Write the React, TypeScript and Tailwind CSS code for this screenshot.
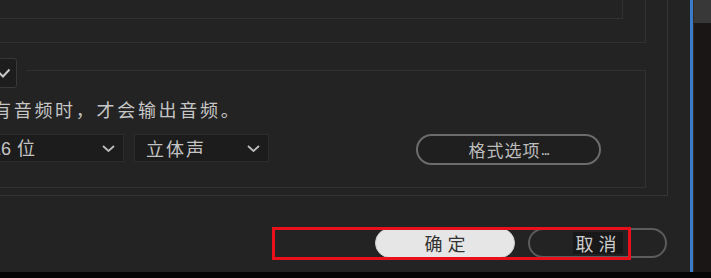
import React from 'react';

const cjk = "font-['Noto_Sans_CJK_SC','Noto_Sans',sans-serif]";

const Chevron: React.FC = () => (
  <svg width="13" height="7" viewBox="0 0 13 7" className="shrink-0">
    <polyline points="1,1 6.5,6 12,1" fill="none" stroke="#bdbdbd" strokeWidth="1.8" />
  </svg>
);

interface SelectProps {
  label: React.ReactNode;
  width: string;
  className?: string;
}

const Select: React.FC<SelectProps> = ({ label, width, className }) => (
  <div
    className={`flex h-[28px] items-center justify-between border border-[#2c2c2c] bg-[#1c1c1c] pl-[11px] pr-[8px] ${width} ${className ?? ''}`}
  >
    <span className="text-[18px] leading-none tracking-[2px] text-[#c4c4c4]">{label}</span>
    <Chevron />
  </div>
);

const App: React.FC = () => {
  return (
    <div className={`flex h-[278px] w-[711px] flex-col overflow-hidden bg-[#232323] ${cjk}`}>
      <div className="flex h-[272px]">
        {/* dialog body */}
        <div className="flex w-[690px] flex-col">
          <div className="flex h-[196px] w-[668px] flex-col border-r border-b border-[#363636]">
            <div className="h-[43px] w-[646px] border-r border-b border-[#313131]">
              <div className="h-[19px] w-[623px] border-r border-b border-[#313131]" />
            </div>

            {/* audio group */}
            <div className="relative -ml-[30px] mt-[27px] h-[118px] w-[676px] border border-[#313131]">
              <div className="absolute -top-[13px] left-[15px] bg-[#232323] pr-[9px]">
                <div className="flex h-[30px] w-[31px] items-center rounded-[3px] border border-[#383838] bg-[#1d1d1d] pl-[11px]">
                  <svg width="13" height="10" viewBox="0 0 13 10">
                    <polyline points="1.5,5 5,8.5 11.5,1.5" fill="none" stroke="#c8c8c8" strokeWidth="2" />
                  </svg>
                </div>
              </div>

              <p className="ml-[22px] mt-[26px] whitespace-nowrap text-[18px] leading-[24px] tracking-[2.7px] text-[#c6c6c6]">
                有音频时，才会输出音频。
              </p>

              <div className="mt-[13px] flex items-start">
                <Select
                  width="w-[145px]"
                  className="ml-[8px]"
                  label={
                    <>
                      <span className="font-['Liberation_Sans',sans-serif] tracking-normal">16</span> 位
                    </>
                  }
                />
                <Select width="w-[135px]" className="ml-[10px]" label="立体声" />
                <button className="ml-[147px] flex h-[31px] w-[185px] items-center justify-center rounded-full border-2 border-[#6c6c6c] bg-[#1f1f1f] text-[17px] leading-none tracking-[1px] text-[#bcbcbc]">
                  格式选项<span className="font-['Liberation_Sans',sans-serif] tracking-[-2px]">...</span>
                </button>
              </div>
            </div>
          </div>

          {/* dialog buttons */}
          <div className="relative mt-[32px] flex justify-end gap-[13px] pr-[23px]">
            <button className="flex h-[30px] w-[140px] items-center justify-center rounded-full border border-[#cfcfcf] bg-[#e6e6e6] pl-[5px] text-[18px] leading-none tracking-[5px] text-[#333]">
              确定
            </button>
            <button className="flex h-[30px] w-[139px] items-center justify-center rounded-full border-2 border-[#5c5c5c] text-[18px] leading-none text-[#cccccc]">
              <span className="bg-[#181818] py-[2px] pl-[3px] pr-[1px] tracking-[5px]">取消</span>
            </button>
            <div className="pointer-events-none absolute -top-[1px] left-[272px] h-[33px] w-[359px] border-[3px] border-[#e8101a]" />
          </div>
        </div>

        {/* adjacent panel edge */}
        <div className="w-[3px] bg-[#3a7ccc]" />
        <div className="flex flex-1 flex-col border-l border-[#3a2a1a]">
          <div className="h-[23px] bg-[#383838]" />
          <div className="flex-1 bg-[#1b1616]" />
        </div>
      </div>
      <div className="h-[6px] bg-[#050505]" />
    </div>
  );
};

export default App;
